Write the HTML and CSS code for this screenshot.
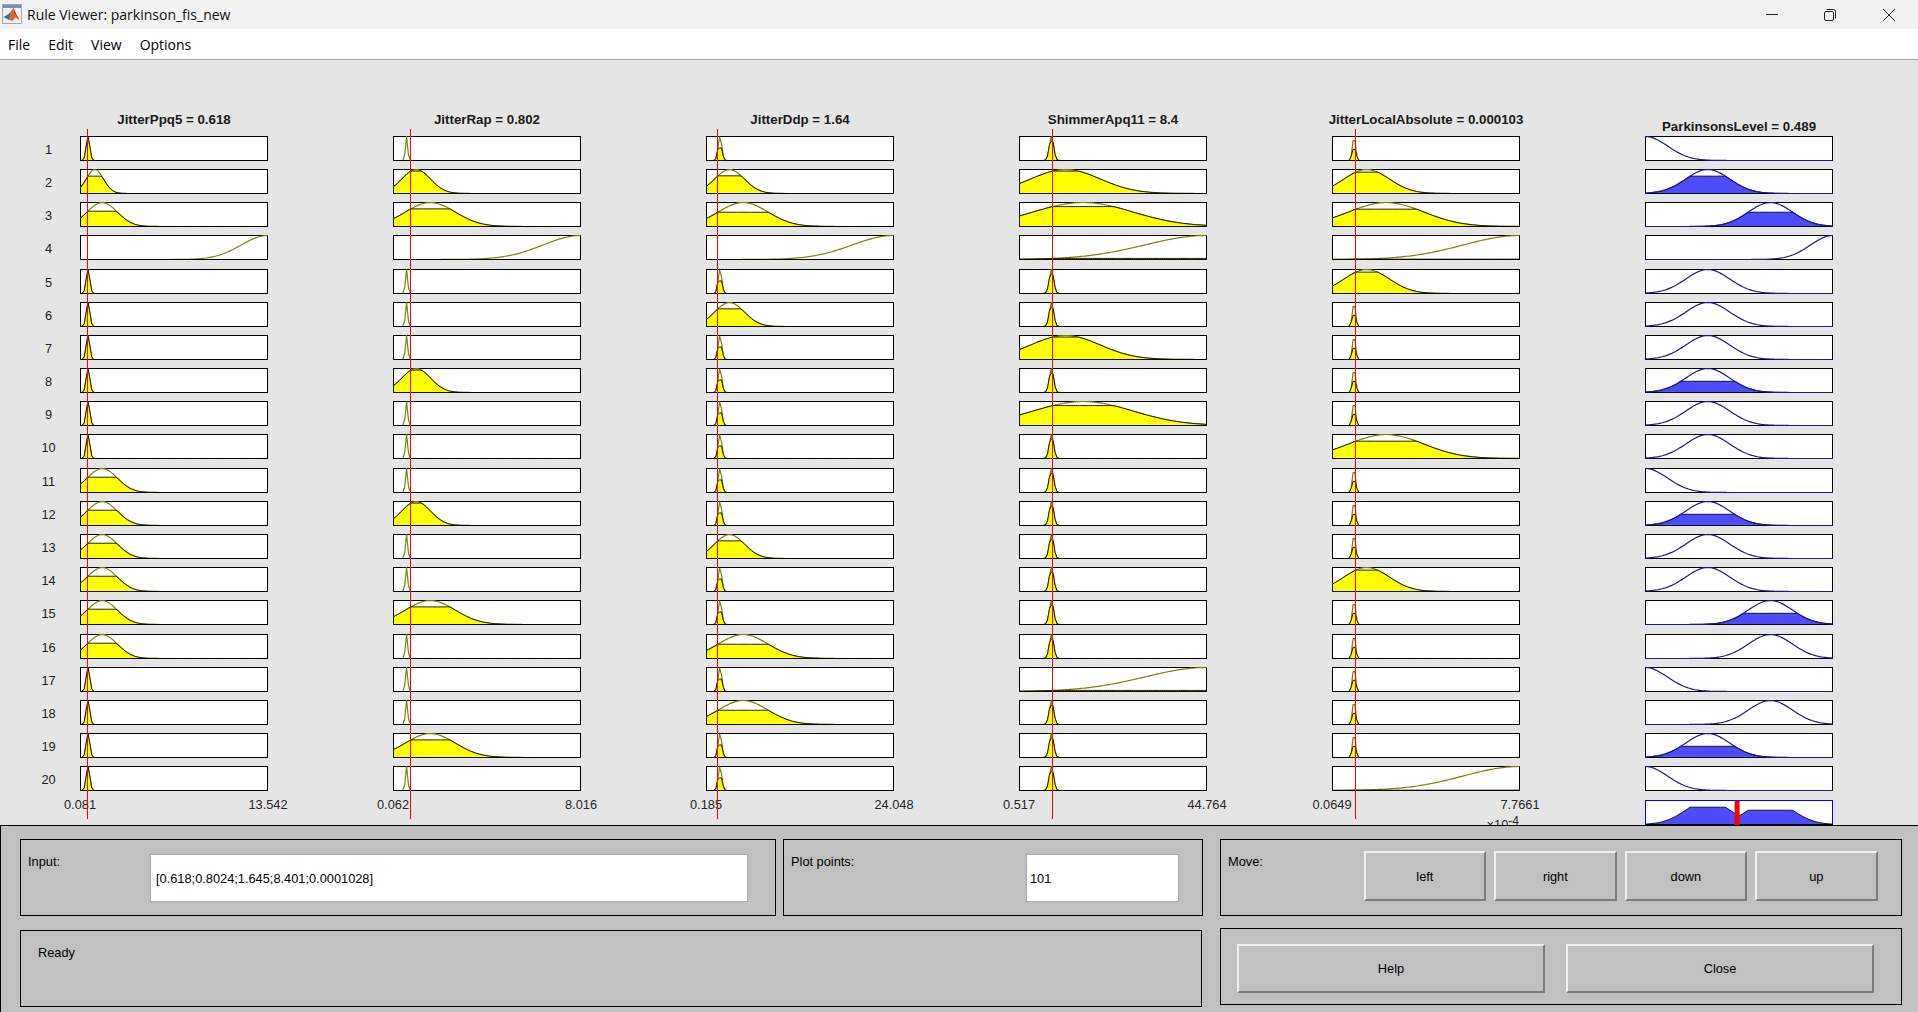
FILE: index.html
```html
<!DOCTYPE html>
<html lang="en">
<head>
  <meta charset="utf8"/>
  <title>Rule Viewer: parkinson_fis_new</title>
  <link rel="stylesheet" href="styles.css">
</head>
<body>
  <header class="titlebar">
    <svg class="app-icon" width="20" height="20" viewBox="0 0 20 20">
      <rect x="0.5" y="0.5" width="19" height="19" fill="#eef2f7" stroke="#a3a8ae"/>
      <rect x="1" y="1" width="18" height="3" fill="#6f93bf"/>
      <path d="M1.5 13 L6 10.5 L8.5 8 L10 9.5 L7 16 Z" fill="#2f6fb5"/>
      <path d="M8.5 8 L11.5 3.5 L14 10 L17.5 16 L13.5 13.5 L10.5 17 L7 16 Z" fill="#e8672a"/>
      <path d="M11.5 3.5 L14 10 L17.5 16 L12.8 10 Z" fill="#b8321c"/>
    </svg>
    <span class="window-title">Rule Viewer: parkinson_fis_new</span>
    <div class="window-controls">
      <span class="window-btn">
        <svg width="12" height="12" viewBox="0 0 12 12"><path d="M0 5.5H12" stroke="#222" fill="none"/></svg>
      </span>
      <span class="window-btn">
        <svg width="12" height="12" viewBox="0 0 12 12"><rect x="0.5" y="2.5" width="9" height="9" rx="1.5" stroke="#222" fill="none"/><path d="M2.5 0.5H9.5A2 2 0 0 1 11.5 2.5V9.5" stroke="#222" fill="none"/></svg>
      </span>
      <span class="window-btn">
        <svg width="12" height="12" viewBox="0 0 12 12"><path d="M0 0L12 12M12 0L0 12" stroke="#222" fill="none"/></svg>
      </span>
    </div>
  </header>
  <nav class="menubar">
    <span>File</span>
    <span>Edit</span>
    <span>View</span>
    <span>Options</span>
  </nav>

  <main class="figure" id="figure"></main>

  <section class="panel">
    <div class="panel-left">
      <div class="frame-row">
        <div class="frame frame-input">
          <span class="frame-label">Input:</span>
          <div class="field">[0.618;0.8024;1.645;8.401;0.0001028]</div>
        </div>
        <div class="frame frame-points">
          <span class="frame-label">Plot points:</span>
          <div class="field">101</div>
        </div>
      </div>
      <div class="frame frame-status">Ready</div>
    </div>
    <div class="panel-right">
      <div class="frame frame-move">
        <span class="frame-label">Move:</span>
        <button class="btn">left</button>
        <button class="btn">right</button>
        <button class="btn">down</button>
        <button class="btn">up</button>
      </div>
      <div class="frame frame-actions">
        <button class="btn">Help</button>
        <button class="btn">Close</button>
      </div>
    </div>
  </section>
  <script src="script.js"></script>
</body>
</html>
```

FILE: styles.css
```css
html, body { margin: 0; padding: 0; }
body {
  width: 1918px; height: 1012px; overflow: hidden; background: #e5e5e5; color: #000;
  font-family: "Liberation Sans", Arial, sans-serif; font-size: 12.8px;
}

.titlebar { display: flex; align-items: center; height: 29px; background: #f2f2f2; padding-left: 2px; }
.app-icon { flex: none; margin-right: 5px; margin-top: -1px; }
.window-title { font-family: "Open Sans", sans-serif; font-size: 14px; color: #111; }
.window-controls { display: flex; margin-left: auto; }
.window-btn { display: flex; align-items: center; justify-content: center; width: 58.5px; height: 29px; }

.menubar {
  display: flex; gap: 18px; height: 31px; box-sizing: border-box; align-items: center;
  padding-left: 8px; background: #fff; border-bottom: 1px solid #a0a0a0;
  font-family: "Open Sans", sans-serif; font-size: 14px;
}

/* plots */
.figure { display: flex; height: 765px; overflow: hidden; background: #e5e5e5; }
.labels-col { flex: none; width: 63px; padding-left: 17px; text-align: center; }
.spacer { height: 75.8px; }
.plots { display: grid; grid-auto-rows: 25px; row-gap: 8.2px; }
.row-num { line-height: 28px; color: #1c1c1c; }
.plot-col { position: relative; flex: none; width: 188px; margin-right: 125px; }
.col-title {
  height: 75.8px; box-sizing: border-box; padding-top: 52px; margin: 0 -40px; line-height: 15px;
  text-align: center; white-space: nowrap; font-size: 13.3px; font-weight: 700; color: #1a1a1a;
}
.col-title.output { padding-top: 59px; }
.plot { display: block; overflow: visible; }
.marker { position: absolute; top: 69px; width: 1px; height: 690px; background: #f00; }
.ticks { display: flex; justify-content: space-between; margin: 6px -40px 0; line-height: 15px; color: #262626; }
.ticks span { width: 80px; text-align: center; }
.exponent { margin-top: 5px; padding-right: 1px; line-height: 15px; text-align: right; color: #262626; }
.exponent sup { font-size: 12px; line-height: 0; vertical-align: 4px; }

.mf-line { fill: none; stroke: #808000; stroke-width: 1.2; stroke-linejoin: round; }
.mf-line.blue { stroke: #1a1a8c; }
.mf-patch { fill: #ff0; stroke: #000; stroke-width: 0.9; stroke-linejoin: round; }
.mf-patch.blue { fill: #4d4dff; }
.box { fill: #fff; stroke: #000; }
.box.agg { stroke: #00f; }

/* bottom panel */
.panel {
  display: flex; gap: 17px; height: 187px; box-sizing: border-box; padding: 13px 0 0 19px;
  background: #c0c0c0; border-top: 1px solid #000; border-left: 1px solid #000;
}
.panel-left { width: 1183px; flex: none; }
.panel-right { width: 682px; flex: none; }
.frame-row { display: flex; gap: 7px; margin-bottom: 14px; }
.frame { display: flex; height: 77px; box-sizing: border-box; border: 1px solid #000; }
.frame-label { flex: none; line-height: 15px; }
.field {
  display: flex; align-items: center; height: 48px; box-sizing: border-box; flex: none;
  background: #fff; border: 1px solid #a8a8a8; padding-left: 5px;
}

.frame-input { width: 756px; padding: 14px 0 0 7px; }
.frame-input .frame-label { width: 122px; }
.frame-input .field { width: 598px; }
.frame-points { width: 420px; padding: 14px 0 0 7px; }
.frame-points .frame-label { width: 235px; }
.frame-points .field { width: 153px; padding-left: 3px; }
.frame-status { display: block; width: 1182px; height: 77px; padding: 14px 0 0 17px; line-height: 15px; }

.frame-move { padding: 11px 0 0 7px; gap: 8px; margin-bottom: 12px; }
.frame-move .frame-label { width: 127.6px; margin-top: 3px; }
.frame-move .btn { width: 122.5px; height: 50px; }
.frame-actions { padding: 15px 0 0 16px; gap: 21px; }
.frame-actions .btn { width: 308px; height: 49px; }

.btn {
  display: block; padding: 0; box-sizing: border-box; background: #c0c0c0; color: #000;
  font: inherit; border: 2px solid; border-color: #f0f0f0 #7c7c7c #7c7c7c #f0f0f0;
}
```

FILE: script.js
```js
const SAMPLES = 101;
const PLOT_W = 187;
const PLOT_H = 24;

// gaussian membership functions [center, sigma] on a 0..1 axis
const inputs = [
  { name: "JitterPpq5", value: "0.618", lo: "0.081", hi: "13.542", x0: 0.0399,
    mfs: { n: [0.04, 0.0095], M: [0.077, 0.046], W: [0.116, 0.08], H: [1, 0.14] },
    rules: "nMWHnnnnnnWWWWWWnnnn" },
  { name: "JitterRap", value: "0.802", lo: "0.062", hi: "8.016", x0: 0.0931,
    mfs: { n: [0.07, 0.006], M: [0.121, 0.076], W: [0.197, 0.132], H: [1, 0.2] },
    rules: "nMWHnnnMnnnMnnWnnnWn" },
  { name: "JitterDdp", value: "1.64", lo: "0.185", hi: "24.048", x0: 0.0612,
    mfs: { n: [0.072, 0.0095], M: [0.123, 0.079], W: [0.196, 0.132], H: [1, 0.22] },
    rules: "nMWHnMnnnnnnMnnWnWnn" },
  { name: "ShimmerApq11", value: "8.4", lo: "0.517", hi: "44.764", x0: 0.1782,
    mfs: { n: [0.171, 0.0115], M: [0.246, 0.185], W: [0.34, 0.265], H: [1, 0.33] },
    rules: "nMWHnnMnWnnnnnnnHnnn" },
  { name: "JitterLocalAbsolute", value: "0.000103", lo: "0.0649", hi: "7.7661", x0: 0.125, exponent: "-4",
    mfs: { n: [0.115, 0.0081], M: [0.183, 0.12], W: [0.287, 0.2], H: [1, 0.3] },
    rules: "nMWHMnnnnWnnnMnnnnnH" }
];
const output = {
  name: "ParkinsonsLevel", value: "0.489", x0: 0.49,
  mfs: { L: [0, 0.117], M: [0.333, 0.117], H: [0.668, 0.117], V: [1, 0.117] },
  rules: "LMHVMMMMMMLMMMHHLHML"
};

function gauss(x, mf) {
  return Math.exp(-((x - mf[0]) ** 2) / (2 * mf[1] ** 2));
}
function sampleAxis() {
  return Array.from({ length: SAMPLES }, (_, i) => i / (SAMPLES - 1));
}
function toPoint(x, y) {
  return (0.5 + PLOT_W * x).toFixed(2) + "," + (0.5 + PLOT_H * (1 - y)).toFixed(2);
}
function linePoints(ys) {
  return ys.map((y, i) => toPoint(i / (SAMPLES - 1), y)).join(" ");
}
function patchPoints(ys) {
  return toPoint(0, 0) + " " + linePoints(ys) + " " + toPoint(1, 0);
}
function plotSvg(body, boxClass) {
  return '<svg class="plot" width="188" height="25" viewBox="0 0 188 25">' +
    '<rect class="box ' + (boxClass || "") + '" x="0.5" y="0.5" width="187" height="24"/>' + body + "</svg>";
}
function inputPlot(mf, level) {
  const line = sampleAxis().map(x => gauss(x, mf));
  const clipped = line.map(y => Math.min(y, level));
  return plotSvg('<polyline class="mf-line" points="' + linePoints(line) + '"/>' +
    '<polygon class="mf-patch" points="' + patchPoints(clipped) + '"/>');
}
function outputPlot(mf, level) {
  const line = sampleAxis().map(x => gauss(x, mf));
  const clipped = line.map(y => Math.min(y, level));
  return plotSvg('<polygon class="mf-patch blue" points="' + patchPoints(clipped) + '"/>' +
    '<polyline class="mf-line blue" points="' + linePoints(line) + '"/>');
}

// firing level of a rule is the min over its inputs
const firing = [];
for (let r = 0; r < 20; r++) {
  firing.push(Math.min(...inputs.map(c => gauss(c.x0, c.mfs[c.rules[r]]))));
}

let html = '<div class="labels-col"><div class="spacer"></div><div class="plots">';
for (let r = 1; r <= 20; r++) {
  html += '<div class="row-num">' + r + "</div>";
}
html += "</div></div>";

for (const c of inputs) {
  html += '<div class="plot-col"><div class="col-title">' + c.name + " = " + c.value + '</div><div class="plots">';
  for (const key of c.rules) {
    const mf = c.mfs[key];
    html += inputPlot(mf, gauss(c.x0, mf));
  }
  html += '</div><div class="ticks"><span>' + c.lo + "</span><span>" + c.hi + "</span></div>";
  if (c.exponent) {
    html += '<div class="exponent">×10<sup>' + c.exponent + "</sup></div>";
  }
  html += '<div class="marker" style="left:' + (c.x0 * PLOT_W).toFixed(2) + 'px"></div></div>';
}

// aggregate is the max of the clipped output sets
let aggregate = sampleAxis().map(() => 0);
html += '<div class="plot-col"><div class="col-title output">' + output.name + " = " + output.value + '</div><div class="plots">';
for (let r = 0; r < 20; r++) {
  const mf = output.mfs[output.rules[r]];
  html += outputPlot(mf, firing[r]);
  aggregate = aggregate.map((y, i) => Math.max(y, Math.min(gauss(i / (SAMPLES - 1), mf), firing[r])));
}
const barX = 0.5 + PLOT_W * output.x0;
html += plotSvg('<polygon class="mf-patch blue" points="' + patchPoints(aggregate) + '"/>' +
  '<path d="M' + barX.toFixed(2) + ' 1V25" stroke="#f00" stroke-width="5" fill="none"/>', "agg");
html += "</div></div>";

document.getElementById("figure").innerHTML = html;
```
